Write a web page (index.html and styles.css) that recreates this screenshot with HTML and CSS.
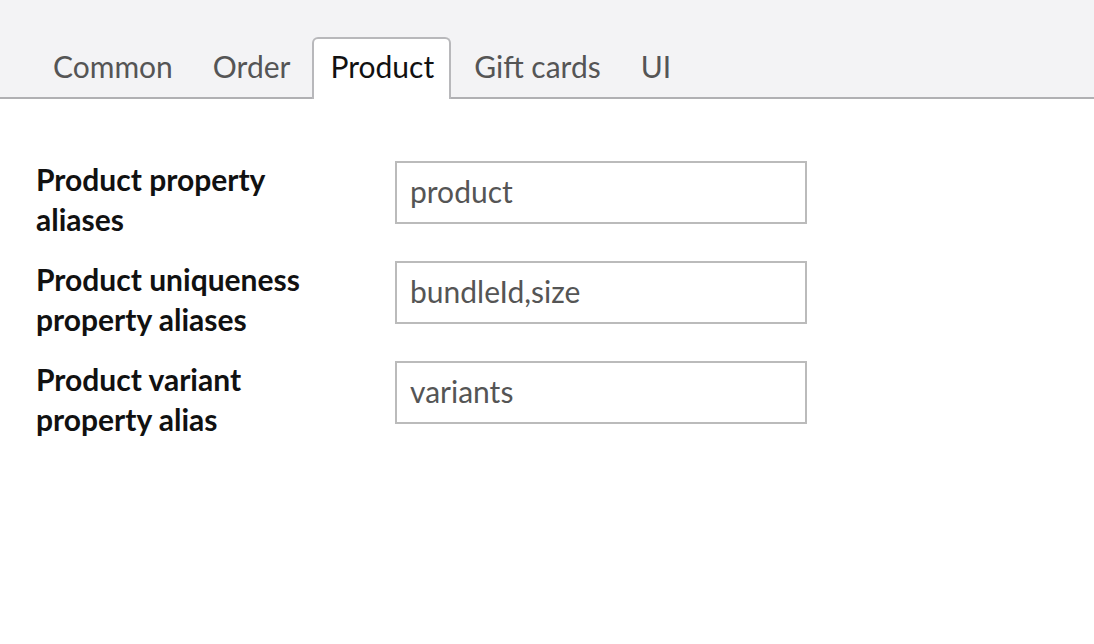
FILE: index.html
```html
<!DOCTYPE html>
<html>
<head>
<meta charset="utf-8">
<link rel="stylesheet" href="styles.css">
</head>
<body>
<div class="tabbar">
  <div class="tab">Common</div>
  <div class="tab">Order</div>
  <div class="tab active">Product</div>
  <div class="tab">Gift cards</div>
  <div class="tab">UI</div>
</div>
<div class="form">
  <div class="row">
    <label class="label">Product property aliases</label>
    <input class="field" type="text" value="product">
  </div>
  <div class="row">
    <label class="label">Product uniqueness property aliases</label>
    <input class="field" type="text" value="bundleId,size">
  </div>
  <div class="row">
    <label class="label">Product variant property alias</label>
    <input class="field" type="text" value="variants">
  </div>
</div>
</body>
</html>
```
FILE: styles.css
```css
html, body {
  margin: 0;
  padding: 0;
  background: #fff;
  font-family: Lato, "Noto Sans", sans-serif;
}
.tabbar {
  background: #f3f3f5;
  height: 97px;
  border-bottom: 2px solid #b0b0b3;
  display: flex;
  align-items: flex-end;
  padding-left: 33px;
  box-sizing: content-box;
}
.tab {
  height: 62px;
  line-height: 55px;
  padding: 0 18px;
  font-size: 30px;
  color: #555;
  margin-bottom: -2px;
  border: 2px solid transparent;
  border-bottom: none;
  box-sizing: border-box;
}
.tab.active {
  background: #fff;
  color: #111;
  border-color: #b8b8bb;
  border-radius: 6px 6px 0 0;
  padding: 0 15px 0 16px;
  margin: 0 3px -2px 2px;
}
.form {
  padding: 60px 0 0 36px;
  display: flex;
  flex-direction: column;
  gap: 20px;
}
.row {
  display: flex;
  align-items: flex-start;
}
.label {
  width: 300px;
  margin-right: 59px;
  font-weight: bold;
  font-size: 30px;
  line-height: 40px;
  color: #111;
}
.field {
  width: 412px;
  height: 63px;
  margin-top: 2px;
  box-sizing: border-box;
  border: 2px solid #bbb;
  padding: 0 12px 3px 13px;
  font-family: Lato, "Noto Sans", sans-serif;
  font-size: 30px;
  color: #555;
  outline: none;
  background: #fff;
}
```
